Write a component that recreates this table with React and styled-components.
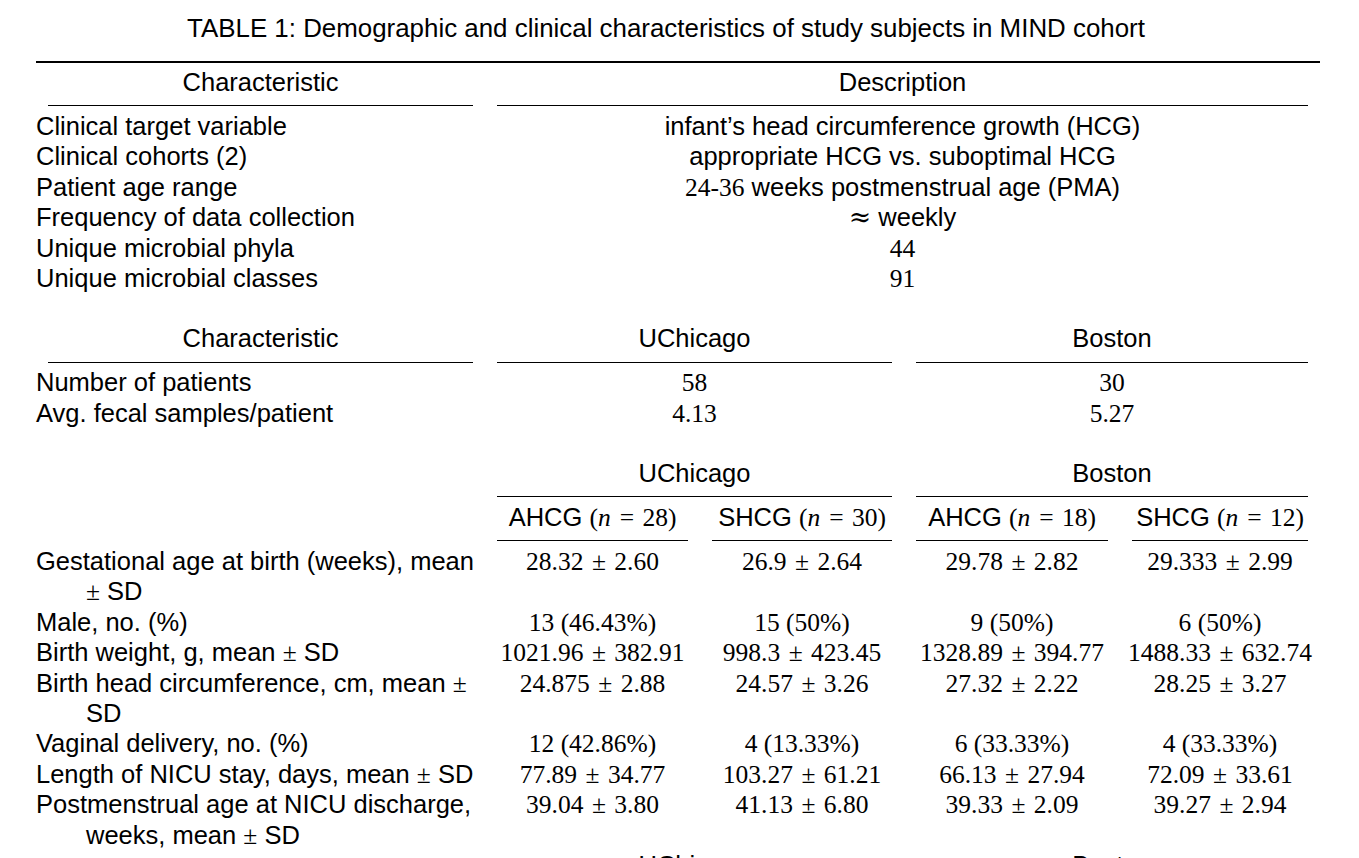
import React from "react";
import styled, { createGlobalStyle } from "styled-components";

const GlobalStyle = createGlobalStyle`
  html, body { margin: 0; padding: 0; background: #fff; overflow: hidden; }
  body { font-family: "Liberation Sans", Arial, sans-serif; color: #000; }
`;

const Page = styled.div`
  width: 1359px;
  height: 858px;
  box-sizing: border-box;
  padding: 13px 39px 0 36px;
  overflow: hidden;
`;

const Caption = styled.div`
  font-size: 25.9px;
  line-height: 30px;
  text-align: center;
  padding-right: 24px;
  margin-bottom: 18px;
  white-space: nowrap;
`;

const Table = styled.div`
  border-top: 2px solid #000;
  padding-top: 4px;
  font-size: 25.5px;
  line-height: 30.4px;
`;

const Section = styled.div`
  display: grid;
  grid-template-columns: 449px 215px 204px 216px 200px;
  margin-top: ${(p) => p.$gap || 0}px;
`;

const HeadCell = styled.div`
  grid-column: ${(p) => p.$col} / span ${(p) => p.$span};
  padding: 0 12px;
  margin-bottom: 4.5px;
`;

const HeadText = styled.div`
  text-align: center;
  white-space: nowrap;
  padding-bottom: 8px;
  border-bottom: 1px solid #000;
`;

const Label = styled.div`
  grid-column: 1;
  padding: 0 5px 0 50px;
  text-indent: -50px;
`;

const Value = styled.div`
  grid-column: span ${(p) => p.$span || 1};
  text-align: center;
  white-space: nowrap;
`;

const M = styled.span`
  font-family: "Liberation Serif", "Times New Roman", serif;
  line-height: 0;
`;

const MI = styled.i`
  font-family: "Liberation Serif", "Times New Roman", serif;
  line-height: 0;
  padding-right: 0.04em;
`;

const Op = styled.span`
  font-family: "Liberation Serif", "Times New Roman", serif;
  line-height: 0;
  margin: 0 ${(p) => p.$space || 0.33}em;
`;

const Approx = styled.span`
  font-family: "DejaVu Serif", serif;
  font-size: 1.05em;
  line-height: 0;
`;

const Num = ({ v }) => {
  const parts = v.split(" ± ");
  if (parts.length === 2) {
    return (
      <M>
        {parts[0]}
        <Op>±</Op>
        {parts[1]}
      </M>
    );
  }
  return <M>{v}</M>;
};

const Group = ({ name, n }) => (
  <>
    {name} <M>(</M>
    <MI>n</MI>
    <Op $space={0.32}>=</Op>
    <M>{n})</M>
  </>
);

const LabelText = ({ t }) => {
  const parts = t.split("±");
  return parts.map((p, i) => (
    <React.Fragment key={i}>
      {i > 0 && <M>±</M>}
      {p}
    </React.Fragment>
  ));
};

const overview = [
  ["Clinical target variable", <>infant’s head circumference growth (HCG)</>],
  ["Clinical cohorts (2)", <>appropriate HCG vs. suboptimal HCG</>],
  ["Patient age range", <><M>24-36</M> weeks postmenstrual age (PMA)</>],
  ["Frequency of data collection", <><Approx>≈</Approx> weekly</>],
  ["Unique microbial phyla", <M>44</M>],
  ["Unique microbial classes", <M>91</M>],
];

const sites = [
  ["Number of patients", "58", "30"],
  ["Avg. fecal samples/patient", "4.13", "5.27"],
];

const clinical = [
  ["Gestational age at birth (weeks), mean ± SD", "28.32 ± 2.60", "26.9 ± 2.64", "29.78 ± 2.82", "29.333 ± 2.99"],
  ["Male, no. (%)", "13 (46.43%)", "15 (50%)", "9 (50%)", "6 (50%)"],
  ["Birth weight, g, mean ± SD", "1021.96 ± 382.91", "998.3 ± 423.45", "1328.89 ± 394.77", "1488.33 ± 632.74"],
  ["Birth head circumference, cm, mean ± SD", "24.875 ± 2.88", "24.57 ± 3.26", "27.32 ± 2.22", "28.25 ± 3.27"],
  ["Vaginal delivery, no. (%)", "12 (42.86%)", "4 (13.33%)", "6 (33.33%)", "4 (33.33%)"],
  ["Length of NICU stay, days, mean ± SD", "77.89 ± 34.77", "103.27 ± 61.21", "66.13 ± 27.94", "72.09 ± 33.61"],
  ["Postmenstrual age at NICU discharge, weeks, mean ± SD", "39.04 ± 3.80", "41.13 ± 6.80", "39.33 ± 2.09", "39.27 ± 2.94"],
];

export default function App() {
  return (
    <>
      <GlobalStyle />
      <Page>
        <Caption>
          TABLE 1: Demographic and clinical characteristics of study subjects in MIND cohort
        </Caption>
        <Table>
          <Section>
            <HeadCell $col={1} $span={1}><HeadText>Characteristic</HeadText></HeadCell>
            <HeadCell $col={2} $span={4}><HeadText>Description</HeadText></HeadCell>
            {overview.map(([l, v]) => (
              <React.Fragment key={l}>
                <Label>{l}</Label>
                <Value $span={4}>{v}</Value>
              </React.Fragment>
            ))}
          </Section>

          <Section $gap={30}>
            <HeadCell $col={1} $span={1}><HeadText>Characteristic</HeadText></HeadCell>
            <HeadCell $col={2} $span={2}><HeadText>UChicago</HeadText></HeadCell>
            <HeadCell $col={4} $span={2}><HeadText>Boston</HeadText></HeadCell>
            {sites.map(([l, a, b]) => (
              <React.Fragment key={l}>
                <Label>{l}</Label>
                <Value $span={2}><Num v={a} /></Value>
                <Value $span={2}><Num v={b} /></Value>
              </React.Fragment>
            ))}
          </Section>

          <Section $gap={30}>
            <HeadCell $col={2} $span={2}><HeadText>UChicago</HeadText></HeadCell>
            <HeadCell $col={4} $span={2}><HeadText>Boston</HeadText></HeadCell>
            <HeadCell $col={2} $span={1}><HeadText><Group name="AHCG" n="28" /></HeadText></HeadCell>
            <HeadCell $col={3} $span={1}><HeadText><Group name="SHCG" n="30" /></HeadText></HeadCell>
            <HeadCell $col={4} $span={1}><HeadText><Group name="AHCG" n="18" /></HeadText></HeadCell>
            <HeadCell $col={5} $span={1}><HeadText><Group name="SHCG" n="12" /></HeadText></HeadCell>
            {clinical.map(([l, ...vals]) => (
              <React.Fragment key={l}>
                <Label><LabelText t={l} /></Label>
                {vals.map((v, i) => (
                  <Value key={i}><Num v={v} /></Value>
                ))}
              </React.Fragment>
            ))}
          </Section>

          <Section>
            <HeadCell $col={2} $span={2}><HeadText>UChicago</HeadText></HeadCell>
            <HeadCell $col={4} $span={2}><HeadText>Boston</HeadText></HeadCell>
          </Section>
        </Table>
      </Page>
    </>
  );
}
